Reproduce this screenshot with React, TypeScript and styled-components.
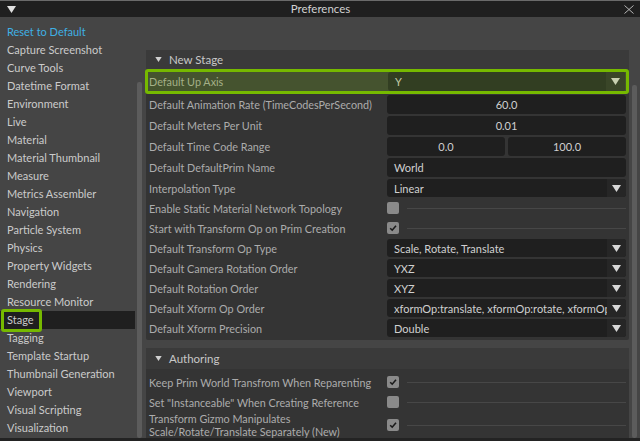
import React from "react";
import styled, { createGlobalStyle, css } from "styled-components";

const GlobalStyle = createGlobalStyle`
  html, body { margin: 0; padding: 0; background: #454545; }
  body { font-family: "Lato", "Open Sans", sans-serif; font-size: 11px; }
  * { box-sizing: border-box; }
`;

const Window = styled.div`
  width: 640px;
  height: 441px;
  display: flex;
  flex-direction: column;
  background: #454545;
  overflow: hidden;
  border-bottom: 3px solid #232323;
`;

const TitleBar = styled.div`
  height: 17px;
  flex: none;
  background: #1f1f1f;
  border-top: 1px solid #6a6a6a;
  display: grid;
  grid-template-columns: 1fr auto 1fr;
  align-items: center;
  padding: 0 6px 0 7px;
  color: #d2d2d2;
`;

const Title = styled.div`
  font-size: 11.5px;
  line-height: 16px;
`;

const CloseBox = styled.div`
  justify-self: end;
  display: flex;
  align-items: center;
`;

const Main = styled.div`
  flex: 1;
  min-height: 0;
  display: flex;
`;

const Sidebar = styled.div`
  width: 142px;
  flex: none;
  display: flex;
  gap: 2px;
`;

const NavList = styled.div`
  width: 135px;
  padding-top: 6px;
  display: flex;
  flex-direction: column;
`;

const NavItem = styled.div<{ $active?: boolean; $link?: boolean }>`
  position: relative;
  height: 18px;
  line-height: 18px;
  padding-left: 7px;
  font-size: 11px;
  white-space: nowrap;
  color: ${(p) => (p.$link ? "#3fb0e4" : "#cbcbcb")};
  background: ${(p) => (p.$active ? "#1f1f1f" : "transparent")};
`;

const Annotation = styled.div`
  position: absolute;
  left: 1px;
  top: -2px;
  width: 41px;
  height: 23px;
  border: 3px solid #76b900;
  border-radius: 3px;
`;

const ScrollTrack = styled.div<{ $offset: number }>`
  width: 5px;
  flex: none;
  display: flex;
  flex-direction: column;
  padding-top: ${(p) => p.$offset}px;
`;

const Thumb = styled.div`
  flex: 1;
  background: #5c5c5c;
  border-radius: 2px;
`;

const Content = styled.div`
  flex: 1;
  display: flex;
  gap: 3px;
  padding: 33px 0 0 4px;
`;

const Frames = styled.div`
  width: 483px;
  flex: none;
  display: flex;
  flex-direction: column;
  gap: 8px;
`;

const Frame = styled.div`
  background: #343434;
  border-radius: 2px;
  display: flex;
  flex-direction: column;
`;

const FrameHeader = styled.div<{ $h: number }>`
  height: ${(p) => p.$h}px;
  background: #3a3a3a;
  display: flex;
  align-items: center;
  gap: 7px;
  padding-left: 9px;
  color: #c8c8c8;
  font-size: 11.5px;
`;

const FrameBody = styled.div<{ $pt: number }>`
  display: flex;
  flex-direction: column;
  padding: ${(p) => p.$pt}px 0 2px;
`;

const Row = styled.div<{ $h?: number; $selected?: boolean }>`
  height: ${(p) => p.$h ?? 20}px;
  display: flex;
  align-items: center;
  padding: 0 3px;
  ${(p) =>
    p.$selected &&
    css`
      margin: 0 0 0 -1px;
      padding: 0 1px 0 1px;
      border: 3px solid #76b900;
      border-radius: 3px;
      background: #45532f;
      align-items: stretch;
    `}
`;

const Label = styled.div<{ $selected?: boolean }>`
  width: 238px;
  flex: none;
  white-space: nowrap;
  font-size: 10.8px;
  color: ${(p) => (p.$selected ? "#a4b087" : "#acacac")};
  line-height: 13px;
  ${(p) =>
    p.$selected &&
    css`
      display: flex;
      align-items: center;
      width: 239px;
    `}
`;

const Field = styled.div<{ $align?: "left" | "center" }>`
  flex: 1;
  height: 19px;
  background: #1f1f1f;
  border-radius: 3px;
  display: flex;
  align-items: center;
  justify-content: ${(p) => (p.$align === "left" ? "flex-start" : "center")};
  padding-left: ${(p) => (p.$align === "left" ? "7px" : "0")};
  color: #d0d0d0;
  white-space: nowrap;
`;

const Pair = styled.div`
  flex: 1;
  display: flex;
  gap: 3px;
`;

const Combo = styled.div<{ $selected?: boolean }>`
  flex: 1;
  height: ${(p) => (p.$selected ? "auto" : "18px")};
  background: ${(p) => (p.$selected ? "#323e22" : "#1f1f1f")};
  border-radius: 3px;
  display: flex;
  overflow: hidden;
  color: ${(p) => (p.$selected ? "#c3cca8" : "#d0d0d0")};
`;

const ComboText = styled.div`
  flex: 1;
  min-width: 0;
  overflow: hidden;
  white-space: nowrap;
  padding-left: 7px;
  display: flex;
  align-items: center;
`;

const ComboArrow = styled.div<{ $selected?: boolean }>`
  width: 19px;
  flex: none;
  background: ${(p) => (p.$selected ? "#3a4628" : "#262626")};
  display: flex;
  align-items: center;
  justify-content: center;
`;

const CheckWrap = styled.div`
  flex: 1;
  display: flex;
  align-items: center;
  gap: 8px;
`;

const Box = styled.div`
  width: 12px;
  height: 12px;
  flex: none;
  background: #8a8a8a;
  border-radius: 2px;
  display: flex;
  align-items: center;
  justify-content: center;
`;

const Rule = styled.div`
  flex: 1;
  height: 1px;
  background: #474747;
`;

const Triangle = ({ size = 9, color = "#d8d8d8" }: { size?: number; color?: string }) => (
  <svg width={size} height={Math.round(size * 0.78)} viewBox="0 0 9 7">
    <path d="M0 0 H9 L4.5 7 Z" fill={color} />
  </svg>
);

const Check = ({ on }: { on?: boolean }) => (
  <CheckWrap>
    <Box>
      {on && (
        <svg width="10" height="10" viewBox="0 0 10 10">
          <path d="M2.2 5.2 L4.2 7.2 L8 2.8" stroke="#1a1a1a" strokeWidth="1.6" fill="none" />
        </svg>
      )}
    </Box>
    <Rule />
  </CheckWrap>
);

const navItems = [
  "Capture Screenshot",
  "Curve Tools",
  "Datetime Format",
  "Environment",
  "Live",
  "Material",
  "Material Thumbnail",
  "Measure",
  "Metrics Assembler",
  "Navigation",
  "Particle System",
  "Physics",
  "Property Widgets",
  "Rendering",
  "Resource Monitor",
  "Stage",
  "Tagging",
  "Template Startup",
  "Thumbnail Generation",
  "Viewport",
  "Visual Scripting",
  "Visualization",
];

const ComboRow = ({ label, value }: { label: string; value: string }) => (
  <Row>
    <Label>{label}</Label>
    <Combo>
      <ComboText>{value}</ComboText>
      <ComboArrow>
        <Triangle />
      </ComboArrow>
    </Combo>
  </Row>
);

export default function App() {
  return (
    <>
      <GlobalStyle />
      <Window>
        <TitleBar>
          <Triangle size={9} color="#e0e0e0" />
          <Title>Preferences</Title>
          <CloseBox>
            <svg width="10" height="9" viewBox="0 0 10 9">
              <path d="M0.5 0.5 L9.5 8.5 M9.5 0.5 L0.5 8.5" stroke="#b8b8b8" strokeWidth="1" />
            </svg>
          </CloseBox>
        </TitleBar>
        <Main>
          <Sidebar>
            <NavList>
              <NavItem $link>Reset to Default</NavItem>
              {navItems.map((n) => (
                <NavItem key={n} $active={n === "Stage"}>
                  {n}
                  {n === "Stage" && <Annotation />}
                </NavItem>
              ))}
            </NavList>
            <ScrollTrack $offset={65}>
              <Thumb />
            </ScrollTrack>
          </Sidebar>
          <Content>
            <Frames>
              <Frame>
                <FrameHeader $h={19}>
                  <Triangle size={7} color="#d0d0d0" />
                  New Stage
                </FrameHeader>
                <FrameBody $pt={0}>
                  <Row $h={25} $selected>
                    <Label $selected>Default Up Axis</Label>
                    <Combo $selected>
                      <ComboText>Y</ComboText>
                      <ComboArrow $selected>
                        <Triangle color="#c8d0b0" />
                      </ComboArrow>
                    </Combo>
                  </Row>
                  <Row $h={21}>
                    <Label>Default Animation Rate (TimeCodesPerSecond)</Label>
                    <Field>60.0</Field>
                  </Row>
                  <Row $h={21}>
                    <Label>Default Meters Per Unit</Label>
                    <Field>0.01</Field>
                  </Row>
                  <Row $h={21}>
                    <Label>Default Time Code Range</Label>
                    <Pair>
                      <Field>0.0</Field>
                      <Field>100.0</Field>
                    </Pair>
                  </Row>
                  <Row $h={21}>
                    <Label>Default DefaultPrim Name</Label>
                    <Field $align="left">World</Field>
                  </Row>
                  <ComboRow label="Interpolation Type" value="Linear" />
                  <Row>
                    <Label>Enable Static Material Network Topology</Label>
                    <Check />
                  </Row>
                  <Row>
                    <Label>Start with Transform Op on Prim Creation</Label>
                    <Check on />
                  </Row>
                  <ComboRow label="Default Transform Op Type" value="Scale, Rotate, Translate" />
                  <ComboRow label="Default Camera Rotation Order" value="YXZ" />
                  <ComboRow label="Default Rotation Order" value="XYZ" />
                  <ComboRow
                    label="Default Xform Op Order"
                    value="xformOp:translate, xformOp:rotate, xformOp:scale"
                  />
                  <ComboRow label="Default Xform Precision" value="Double" />
                </FrameBody>
              </Frame>
              <Frame>
                <FrameHeader $h={21}>
                  <Triangle size={7} color="#d0d0d0" />
                  Authoring
                </FrameHeader>
                <FrameBody $pt={3}>
                  <Row>
                    <Label>Keep Prim World Transfrom When Reparenting</Label>
                    <Check on />
                  </Row>
                  <Row>
                    <Label>Set "Instanceable" When Creating Reference</Label>
                    <Check />
                  </Row>
                  <Row $h={26}>
                    <Label>
                      Transform Gizmo Manipulates
                      <br />
                      Scale/Rotate/Translate Separately (New)
                    </Label>
                    <Check on />
                  </Row>
                </FrameBody>
              </Frame>
            </Frames>
            <ScrollTrack $offset={35}>
              <Thumb />
            </ScrollTrack>
          </Content>
        </Main>
      </Window>
    </>
  );
}
